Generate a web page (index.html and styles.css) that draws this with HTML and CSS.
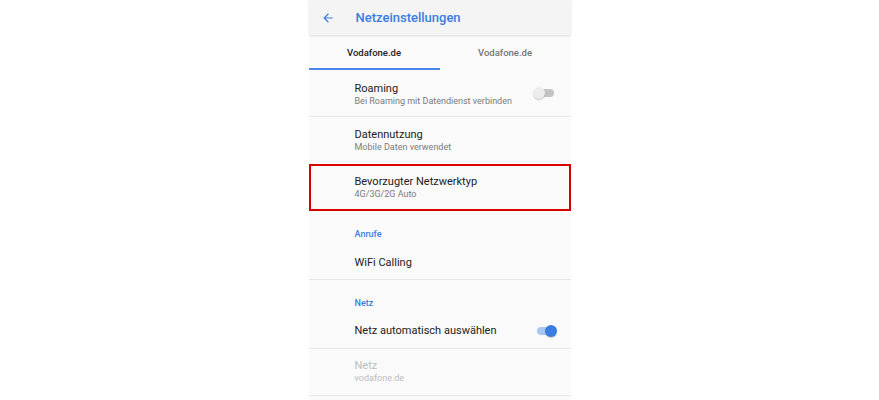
FILE: index.html
```html
<!DOCTYPE html>
<html lang="de">
<head>
<meta charset="utf-8">
<link rel="stylesheet" href="styles.css">
</head>
<body>
<div class="stage">
  <div class="phone">
    <header class="appbar">
      <svg class="back" width="14" height="14" viewBox="0 0 24 24"><path d="M20 11H7.83l5.59-5.59L12 4l-8 8 8 8 1.41-1.41L7.83 13H20v-2z" fill="#3b7de0"/></svg>
      <h1 class="title">Netzeinstellungen</h1>
    </header>
    <nav class="tabs">
      <div class="tab active">Vodafone.de</div>
      <div class="tab">Vodafone.de</div>
    </nav>
    <div class="list">
      <div class="row two divider first">
        <div class="text">
          <div class="primary">Roaming</div>
          <div class="secondary">Bei Roaming mit Datendienst verbinden</div>
        </div>
        <div class="switch off"><span class="track"></span><span class="knob"></span></div>
      </div>
      <div class="row two">
        <div class="text">
          <div class="primary">Datennutzung</div>
          <div class="secondary">Mobile Daten verwendet</div>
        </div>
      </div>
      <div class="row two highlight">
        <div class="text">
          <div class="primary">Bevorzugter Netzwerktyp</div>
          <div class="secondary">4G/3G/2G Auto</div>
        </div>
      </div>
      <div class="section">Anrufe</div>
      <div class="row one divider wifi">
        <div class="text"><div class="primary">WiFi Calling</div></div>
      </div>
      <div class="section">Netz</div>
      <div class="row one divider auto">
        <div class="text"><div class="primary">Netz automatisch auswählen</div></div>
        <div class="switch on"><span class="track"></span><span class="knob"></span></div>
      </div>
      <div class="row two divider disabled">
        <div class="text">
          <div class="primary">Netz</div>
          <div class="secondary">vodafone.de</div>
        </div>
      </div>
    </div>
  </div>
</div>
</body>
</html>
```

FILE: styles.css
```css
* { box-sizing: border-box; margin: 0; padding: 0; }
html, body { background: #ffffff; }
body { font-family: Roboto, "Noto Sans", sans-serif; }
.stage { display: flex; justify-content: center; height: 400px; overflow: hidden; }
.phone { width: 262px; background: #fafafa; display: flex; flex-direction: column; }
.appbar {
  height: 35px; background: #f4f4f4; display: flex; align-items: center;
  padding-left: 12px; box-shadow: 0 1px 2px rgba(0,0,0,0.12); position: relative; z-index: 1;
}
.back { flex: none; }
.title { font-size: 13px; font-weight: 500; color: #3b7de0; margin-left: 21px; }
.tabs { height: 35px; display: flex; background: #fafafa; }
.tab { flex: 1; display: flex; align-items: center; justify-content: center; font-size: 9.5px; font-weight: 500; color: #757575; }
.tab.active { color: #212121; border-bottom: 2px solid #4a86e8; padding-top: 2px; }
.list { display: flex; flex-direction: column; }
.row { display: flex; align-items: center; padding-left: 46px; padding-right: 15px; }
.row.two { height: 47px; padding-top: 1px; }
.row.two.first { padding-top: 3px; }
.row.two.disabled { padding-top: 0; padding-bottom: 1px; }
.row.divider { border-bottom: 1px solid #e6e6e6; }
.text { flex: 1; }
.primary { font-size: 11px; color: #212121; line-height: 13px; }
.secondary { font-size: 9px; color: #7a7a7a; line-height: 13px; }
.highlight { outline: 2px solid #d90000; outline-offset: -2px; height: 46px; }
.section { font-size: 9px; font-weight: 500; color: #3b7de0; padding-left: 46px; height: 36px; display: flex; align-items: flex-end; padding-bottom: 8px; }
.wifi { height: 33px; padding-bottom: 1px; }
.auto { height: 33px; padding-bottom: 3px; }
.disabled .primary, .disabled .secondary { color: #bdbdbd; }
.switch { position: relative; width: 21px; height: 12px; flex: none; }
.switch .track { position: absolute; left: 2px; right: 0; top: 2px; height: 8px; border-radius: 4px; }
.switch .knob { position: absolute; top: 0; width: 12px; height: 12px; border-radius: 50%; box-shadow: 0 1px 1px rgba(0,0,0,0.2); }
.switch.off { margin-right: 2px; margin-top: -3px; }
.switch.off .track { background: #9e9e9e; opacity: 0.6; }
.switch.off .knob { left: 0; background: #ececec; }
.switch.on .track { background: #a9c6f2; }
.switch.on .knob { right: -1px; background: #3b7de0; }
```
